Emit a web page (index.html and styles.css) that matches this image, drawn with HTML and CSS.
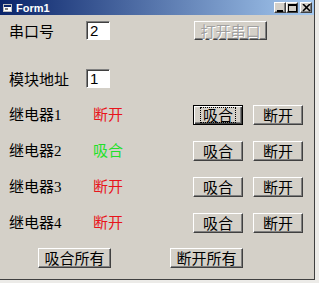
FILE: index.html
```html
<!DOCTYPE html>
<html lang="zh">
<head>
    <meta charset="UTF-8">
    <title>Form1</title>
    <link rel="stylesheet" href="styles.css">
</head>
<body>
    <div class="window">
        <div class="titlebar">
            <svg class="title-icon" width="9" height="8" viewBox="0 0 9 8">
                <rect x="0.5" y="0.5" width="8" height="7" fill="#fff" stroke="#c0c0c0"/>
                <rect x="1" y="1" width="7" height="2" fill="#0a246a"/>
                <rect x="2" y="4" width="3" height="2" fill="#808080"/>
            </svg>
            <span class="title-text">Form1</span>
            <div class="caption-buttons">
                <div class="cap-btn">
                    <svg width="9" height="8" viewBox="0 0 9 8"><rect x="1" y="6" width="6" height="2" fill="#000"/></svg>
                </div>
                <div class="cap-btn">
                    <svg width="9" height="8" viewBox="0 0 9 8"><rect x="0.5" y="0.5" width="8" height="7" fill="none" stroke="#000"/><rect x="0" y="0" width="9" height="2" fill="#000"/></svg>
                </div>
                <div class="cap-btn close">
                    <svg width="9" height="8" viewBox="0 0 9 8"><path d="M1 0 L8 7 M8 0 L1 7" stroke="#000" stroke-width="1.6"/></svg>
                </div>
            </div>
        </div>

        <div class="content">
            <div class="row row-port">
                <span class="label">串口号</span>
                <div class="textbox">2</div>
                <button class="btn btn-disabled btn-wide">打开串口</button>
            </div>

            <div class="row row-addr">
                <span class="label">模块地址</span>
                <div class="textbox">1</div>
            </div>

            <div class="row relay">
                <span class="relay-name">继电器1</span>
                <span class="status off">断开</span>
                <button class="btn btn-focus"><span class="focus-ring">吸合</span></button>
                <button class="btn">断开</button>
            </div>

            <div class="row relay">
                <span class="relay-name">继电器2</span>
                <span class="status on">吸合</span>
                <button class="btn">吸合</button>
                <button class="btn">断开</button>
            </div>

            <div class="row relay">
                <span class="relay-name">继电器3</span>
                <span class="status off">断开</span>
                <button class="btn">吸合</button>
                <button class="btn">断开</button>
            </div>

            <div class="row relay">
                <span class="relay-name">继电器4</span>
                <span class="status off">断开</span>
                <button class="btn">吸合</button>
                <button class="btn">断开</button>
            </div>

            <div class="row row-all">
                <button class="btn btn-wide">吸合所有</button>
                <button class="btn btn-wide">断开所有</button>
            </div>
        </div>
    </div>
</body>
</html>
```

FILE: styles.css
```css
:root {
    --face: #d4d0c8;
    --shadow: #808080;
    --dark: #404040;
    --light: #ffffff;
}

* {
    margin: 0;
    padding: 0;
    box-sizing: border-box;
}

body {
    background: #ecebe8;
    font-family: "Liberation Serif", "Noto Sans CJK SC", serif;
    font-size: 15px;
    color: #000;
}

.window {
    width: 315px;
    height: 280px;
    background: var(--face);
    border-right: 1px solid var(--dark);
    border-bottom: 1px solid var(--dark);
}

/* Title bar */
.titlebar {
    height: 15px;
    display: flex;
    align-items: center;
    padding: 0 2px 0 3px;
    background: linear-gradient(to right, #0a246a, #a6caf0);
}

.title-icon {
    margin-right: 4px;
}

.title-text {
    font-family: "Liberation Sans", sans-serif;
    font-weight: bold;
    font-size: 11px;
    color: #fff;
    flex: 1;
}

.caption-buttons {
    display: flex;
    gap: 0;
}

.cap-btn {
    width: 12px;
    height: 11px;
    display: flex;
    align-items: center;
    justify-content: center;
    background: var(--face);
    border: 1px solid;
    border-color: var(--light) var(--dark) var(--dark) var(--light);
    box-shadow: inset -1px -1px var(--shadow);
}

.cap-btn.close {
    margin-left: 2px;
}

/* Form content */
.content {
    padding-left: 9px;
}

.row {
    display: flex;
    align-items: center;
}

.label {
    width: 77px;
}

.textbox {
    width: 24px;
    height: 19px;
    background: #fff;
    border: 1px solid;
    border-color: var(--shadow) var(--light) var(--light) var(--shadow);
    box-shadow: inset 1px 1px var(--dark);
    font-family: "Liberation Sans", sans-serif;
    font-size: 15px;
    line-height: 17px;
    padding-left: 3px;
}

.row-port {
    height: 19px;
    margin-top: 6px;
}

.row-port .btn {
    margin-left: 84px;
    height: 19px;
}

.row-addr {
    height: 19px;
    margin-top: 29px;
}

.relay {
    height: 20px;
    margin-top: 16px;
}

.row-addr + .relay {
    margin-top: 17px;
}

.relay-name {
    width: 84px;
    position: relative;
    top: -2px;
}

.status {
    width: 100px;
    font-family: "Noto Sans CJK SC", sans-serif;
    position: relative;
    top: -2px;
}

.status.off {
    color: #e8141c;
}

.status.on {
    color: #22e02a;
}

.relay .btn + .btn {
    margin-left: 10px;
}

.row-all {
    height: 20px;
    margin-top: 15px;
    padding-left: 29px;
    gap: 59px;
}

/* Classic 3D buttons */
.btn {
    width: 50px;
    height: 20px;
    background: var(--face);
    border: 1px solid;
    border-color: var(--light) var(--dark) var(--dark) var(--light);
    box-shadow: inset -1px -1px var(--shadow);
    font-family: "Noto Sans CJK SC", sans-serif;
    font-size: 15px;
    line-height: 16px;
    color: #000;
    display: flex;
    align-items: center;
    justify-content: center;
}

.btn-wide {
    width: 73px;
}

.btn-disabled {
    color: #a0a0a0;
    text-shadow: 1px 1px #fff;
}

.btn-focus {
    border-color: #000;
    box-shadow: inset 1px 1px var(--light), inset -1px -1px var(--dark), inset -2px -2px var(--shadow);
}

.focus-ring {
    outline: 1px dotted #000;
    padding: 0 2px;
    line-height: 14px;
}
```
